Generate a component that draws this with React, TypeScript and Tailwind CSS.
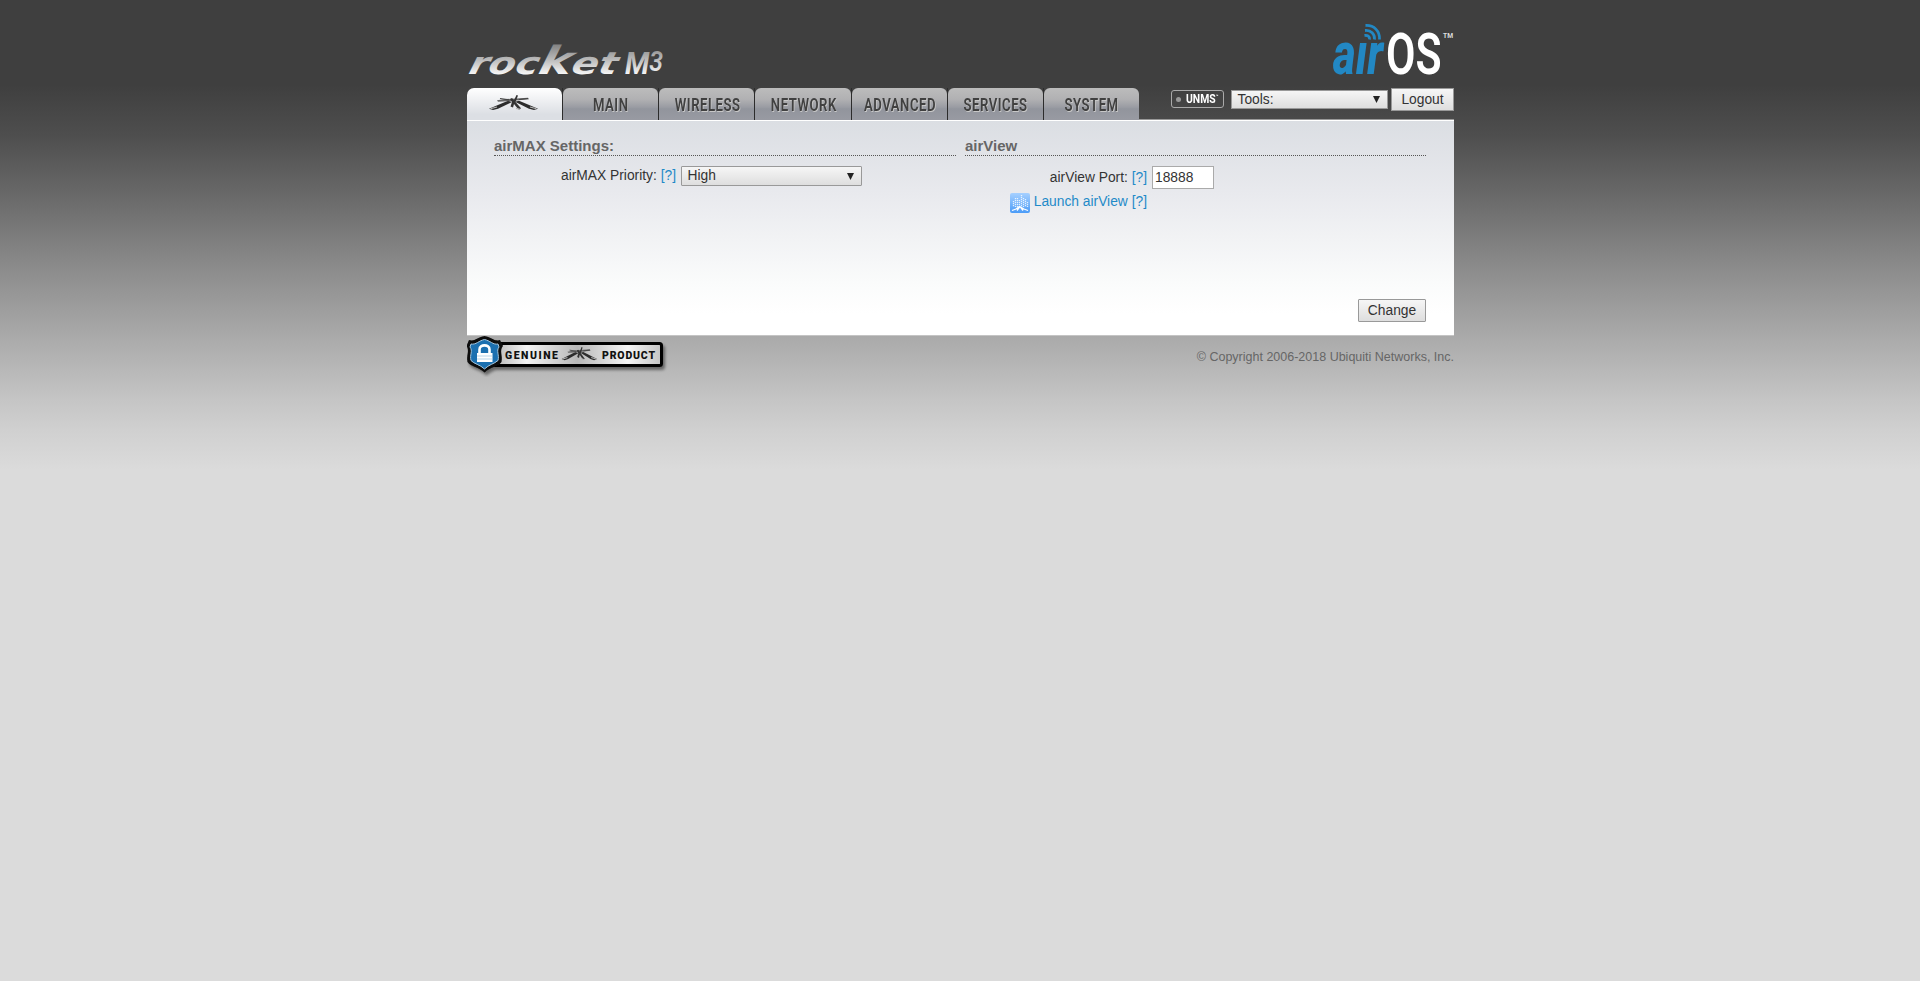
import React from "react";

const tabs = ["MAIN", "WIRELESS", "NETWORK", "ADVANCED", "SERVICES", "SYSTEM"];

function RifleShapes() {
  return (
    <>
      <path d="M1 15.500 L20 6.500 L24 8 L10 15.500 L5 17 Z" fill="#2c2c2c" />
      <path d="M50 15.500 L31 6.500 L27 7.500 L41 15.500 L46 17 Z" fill="#2c2c2c" />
      <path d="M9 6 L18 4.500 L40 3 L41 4.800 L19 7 L10 7.500 Z" fill="#666" />
      <path d="M12 4 L21 5.500 M31 5 L40 4" stroke="#444" strokeWidth="1.200" />
      <path d="M28.500 0 L30 0.500 L27.500 8 L33 15 L31 16.500 L28 13 L26 10 L25 14 L22.500 13 L24 8 L22 4.500 L24 3.500 L26 6 Z" fill="#333" />
      <path d="M2.500 15.500 L9 13.500 M48.500 15.500 L42 13.500 M28 15 L32 16" stroke="#b5b5b5" strokeWidth="1.300" />
    </>
  );
}

function RocketLogo() {
  return (
    <svg width="210" height="88" viewBox="0 0 210 88" className="block">
      <defs>
        <linearGradient id="metal" gradientUnits="userSpaceOnUse" x1="0" y1="44" x2="0" y2="75">
          <stop offset="0" stopColor="#808080" />
          <stop offset="0.45" stopColor="#b4b4b4" />
          <stop offset="1" stopColor="#fafafa" />
        </linearGradient>
      </defs>
      <g transform="translate(17 0) skewX(-14)">
        <text x="2" y="74.500" textLength="148" lengthAdjust="spacingAndGlyphs" fontFamily="DejaVu Sans" fontWeight="700" fontStyle="italic" fontSize="31" fill="url(#metal)">
          roc<tspan fontSize="39">k</tspan>et
        </text>
      </g>
      <text x="158" y="74" fontFamily="Roboto" fontWeight="700" fontStyle="italic" fontSize="31" fill="url(#metal)" textLength="38" lengthAdjust="spacingAndGlyphs">
        M<tspan dy="-3" fontSize="27" fontWeight="600">3</tspan>
      </text>
    </svg>
  );
}

function AirOsLogo() {
  return (
    <svg width="124" height="88" viewBox="0 0 124 88" className="block">
      <defs>
        <clipPath id="lowercase"><rect x="0" y="42" width="60" height="40" /></clipPath>
      </defs>
      <text x="3" y="74" clipPath="url(#lowercase)" textLength="50" lengthAdjust="spacingAndGlyphs" fontFamily="Roboto" fontWeight="800" fontStyle="italic" fontSize="59" fill="#2288c4">air</text>
      <g fill="none" stroke="#2288c4" strokeWidth="2.800">
        <path d="M35.500 25.500 C44 25 50 31 49.500 39.500" />
        <path d="M35 30.500 C41 30 45 34 44.500 39.500" />
        <path d="M34.500 35.500 C37.500 35 40 36.500 39.500 39.500" />
      </g>
      <text x="56" y="74" textLength="55.500" lengthAdjust="spacingAndGlyphs" fontFamily="Roboto" fontWeight="600" fontSize="57" fill="#fff">OS</text>
      <text x="113" y="37.500" textLength="10" lengthAdjust="spacingAndGlyphs" fontFamily="Roboto" fontWeight="700" fontSize="7" fill="#ddd">TM</text>
    </svg>
  );
}

function Select({ value, className }: { value: string; className: string }) {
  return (
    <div className={`flex items-center justify-between border border-[#999] bg-linear-to-b from-[#f6f6f6] to-[#dedede] pr-[7px] pl-[5.500px] leading-4 ${className}`}>
      <span>{value}</span>
      <svg width="7" height="7" viewBox="0 0 8 8"><path d="M0 0 H8 L4 8 Z" fill="#222" /></svg>
    </div>
  );
}

function GenuineBadge() {
  return (
    <svg width="204" height="42" viewBox="0 0 204 42" className="block">
      <defs>
        <linearGradient id="plate" x1="0" y1="0" x2="1" y2="0">
          <stop offset="0" stopColor="#b5b5b5" />
          <stop offset="0.2" stopColor="#f4f4f4" />
          <stop offset="0.5" stopColor="#b8b8b8" />
          <stop offset="0.8" stopColor="#f6f6f6" />
          <stop offset="1" stopColor="#c4c4c4" />
        </linearGradient>
        <filter id="drop" x="-10%" y="-10%" width="120%" height="130%">
          <feDropShadow dx="2" dy="3" stdDeviation="1.500" floodOpacity="0.45" />
        </filter>
      </defs>
      <g filter="url(#drop)">
        <rect x="26" y="8.500" width="168.500" height="22" rx="2" fill="url(#plate)" stroke="#050505" strokeWidth="3" />
        <path d="M2 5 C7 7 11 2 17.500 1 C24 2 28 7 33 5 L36 11 C32 16 36 20 34.500 27 C31 32 23 32 17.500 37.500 C12 32 4 32 0.500 27 C-1 20 3 16 -0.500 11 Z" fill="#0a0a0a" />
        <path d="M4 9 C9 10 12 5.500 17.500 4.500 C23 5.500 26 10 31 9 L32 12 C29 16 32.500 20 31 25.500 C27 29 22 29.500 17.500 34 C13 29.500 7 29 4 25.500 C2.500 20 6 16 3 12 Z" fill="#1b6fb0" stroke="#a8c8de" strokeWidth="1" />
      </g>
      <path d="M12.500 18 V14.500 C12.500 9 22.500 9 22.500 14.500 V18" fill="none" stroke="#fff" strokeWidth="2.600" />
      <path d="M10 18 H25.500 V27 H10 Z" fill="#fff" />
      <path d="M10 21 H25.500 M10 24 H25.500" stroke="#9cc3e0" strokeWidth="0.700" />
      <g fontFamily="Roboto" fontWeight="900" fontSize="10.500" fill="#111">
        <text x="38" y="23.500" textLength="53">GENUINE</text>
        <text x="135" y="23.500" textLength="53">PRODUCT</text>
      </g>
      <svg x="94" y="12" width="36" height="14" viewBox="0 0 50 18" preserveAspectRatio="none">
        <RifleShapes />
      </svg>
    </svg>
  );
}

function Heading({ children }: { children: React.ReactNode }) {
  return (
    <h2 className="h-[19px] border-b border-dotted border-[#555] text-[15px] font-bold leading-[18px] text-[#666]">{children}</h2>
  );
}

const Help = () => <a className="text-[#1f8ac8]">[?]</a>;

export default function App() {
  return (
    <div className="min-h-[981px] bg-[#dbdbdb] bg-[linear-gradient(to_bottom,#3f3f3f_0px,#3f3f3f_85px,#4e4e4e_135px,#6b6b6b_200px,#8a8a8a_265px,#a8a8a8_333px,#c5c5c5_400px,#d0d0d0_430px,#dbdbdb_470px)] font-['Liberation_Sans',sans-serif] text-[13.800px] text-[#333]">
      <div className="mx-auto flex w-[988px] flex-col pl-px">
        <header className="flex h-[88px] items-start justify-between">
          <RocketLogo />
          <AirOsLogo />
        </header>

        <nav className="flex h-8">
          <div className="flex">
            <div className="flex h-[33px] w-[95px] justify-center rounded-t-[7px] bg-linear-to-b from-white to-[#dcdfe4] to-80% pt-[7px]">
              <svg viewBox="0 0 51 18" className="mr-[3px] h-4 w-[51px]" preserveAspectRatio="none"><RifleShapes /></svg>
            </div>
            {tabs.map((label) => (
              <div key={label} className="h-8 w-[96.200px] border-l border-[#2c2c2c]">
                <div className="flex h-8 items-center justify-center rounded-t-[6px] bg-[linear-gradient(to_bottom,#bcbcbc_0%,#b1b1b3_35%,#9a9ca3_60%,#92959d_65%,#989aa2_100%)] pt-[2px] pl-px">
                  <span className="flex w-20 justify-center whitespace-nowrap">
                    <span className="scale-x-[0.72] font-['Roboto'] text-[18.300px] leading-5 font-semibold tracking-[0.700px] text-[#404040] [text-shadow:1px_1px_0_#c8c8c8]">{label}</span>
                  </span>
                </div>
              </div>
            ))}
          </div>
          <div className="flex flex-1 items-start justify-end border-b border-[#999]">
            <div className="mt-[2px] mr-[7px] flex h-[18px] w-[53px] items-center gap-[5px] rounded-[3px] border border-[#aaa] pl-1">
              <i className="size-[5px] rounded-full bg-[#999]" />
              <span className="inline-flex w-[36px] origin-left scale-x-[0.83] font-['Roboto'] text-[12.500px] leading-4 font-bold text-white">UNMS<sup className="top-0 text-[5px] leading-[10px]">™</sup></span>
            </div>
            <Select value="Tools:" className="mt-[2px] mr-[3px] h-[19px] w-[157px]" />
            <button className="h-[23px] w-[63px] border border-[#999] bg-linear-to-b from-[#f6f6f6] to-[#dedede] leading-[21px]">Logout</button>
          </div>
        </nav>

        <main className="flex h-[216px] flex-col border-t border-b border-t-white border-b-[#c4c4c4] bg-[linear-gradient(to_bottom,#dbdee3_0%,#e9eaee_35%,#fafbfb_75%,#fff_90%)] pt-4 pr-7 pl-[27px]">
          <div className="flex h-[162px] gap-[9px]">
            <section className="w-[462px]">
              <Heading>airMAX Settings:</Heading>
              <div className="flex pt-[10px]">
                <div className="w-[182px] pt-[2px] text-right leading-4">airMAX Priority: <Help /></div>
                <Select value="High" className="ml-[5px] h-5 w-[181px] rounded-[1px]" />
              </div>
            </section>
            <section className="w-[461px]">
              <Heading>airView</Heading>
              <div className="flex pt-[10px]">
                <div className="w-[182px] pt-[4px] text-right leading-4">airView Port: <Help /></div>
                <input readOnly value="18888" className="ml-[5px] h-[23px] w-[62px] border border-[#aaa] bg-white px-[2px] leading-4 outline-none" />
              </div>
              <div className="flex w-[182px] justify-end gap-1 pt-[4px] leading-4">
                <svg width="20" height="20" viewBox="0 0 20 20" className="shrink-0">
                  <defs><linearGradient id="sky" x1="0" y1="0" x2="0" y2="1"><stop offset="0" stopColor="#a6d0ff" /><stop offset="1" stopColor="#4b9cf8" /></linearGradient></defs>
                  <rect width="20" height="20" rx="2" fill="url(#sky)" />
                  <path d="M3.500 8 V14 M5.500 5 V14 M7.500 5 V14 M9.500 7 V14 M11.500 2 V14 M13.500 5 V14 M15.500 6 V14 M17.500 9 V14" stroke="#fff" strokeOpacity="0.8" strokeWidth="1.300" strokeDasharray="1.300 0.700" />
                  <path d="M2 17.500 L6 16 L9.500 13.500 L14 16 L18 17.500 M9.500 14 L7 17.500 M10.500 14 L13 17.500" stroke="#fff" fill="none" strokeWidth="1.300" />
                </svg>
                <span className="pt-px whitespace-nowrap text-[#1f8ac8]">Launch airView <Help /></span>
              </div>
            </section>
          </div>
          <div className="flex justify-end">
            <button className="h-[23px] w-[68px] rounded-[1px] border border-[#999] bg-linear-to-b from-[#f6f6f6] to-[#dedede] leading-[21px]">Change</button>
          </div>
        </main>

        <footer className="-mt-px flex justify-between">
          <GenuineBadge />
          <p className="pt-[14px] text-[12.500px] leading-4 text-[#666]">© Copyright 2006-2018 Ubiquiti Networks, Inc.</p>
        </footer>
      </div>
    </div>
  );
}
